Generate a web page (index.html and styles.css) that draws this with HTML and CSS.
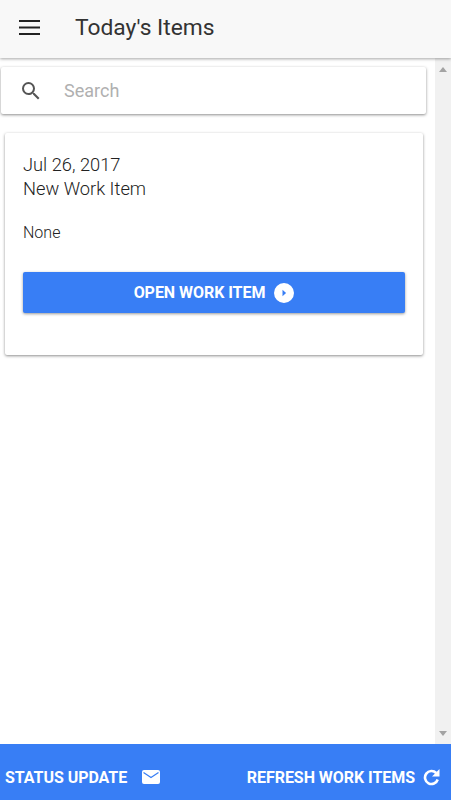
FILE: index.html
```html
<!DOCTYPE html>
<html lang="en">
<head>
<meta charset="UTF-8">
<meta name="viewport" content="width=device-width, initial-scale=1.0">
<title>Today's Items</title>
<link rel="stylesheet" href="styles.css">
</head>
<body>
<div class="page">
    <header class="top-bar">
        <svg class="menu-icon" width="21" height="15" viewBox="0 0 21 15"><path d="M0 0h21v2H0zM0 6.500h21v2H0zM0 13h21v2H0z"/></svg>
        <h1 class="top-title">Today's Items</h1>
    </header>

    <div class="middle">
        <main class="content">
            <div class="search-box">
                <svg class="search-icon" width="24" height="24" viewBox="0 0 24 24"><path d="M15.500 14h-.79l-.28-.27A6.470 6.470 0 0 0 16 9.500 6.500 6.500 0 1 0 9.500 16c1.610 0 3.090-.59 4.230-1.570l.27.280v.79l5 4.990L20.490 19l-4.990-5zm-6 0C7.010 14 5 11.990 5 9.500S7.010 5 9.500 5 14 7.010 14 9.500 11.990 14 9.500 14z"/></svg>
                <span class="search-text">Search</span>
            </div>

            <section class="card">
                <div class="card-line">Jul 26, 2017</div>
                <div class="card-line">New Work Item</div>
                <p class="card-note">None</p>
                <button class="open-btn" type="button">
                    OPEN WORK ITEM
                    <svg class="open-icon" width="20" height="20" viewBox="0 0 20 20"><path fill-rule="evenodd" d="M10 0a10 10 0 1 0 0 20 10 10 0 0 0 0-20zM8.500 6.800l3.600 3.200-3.600 3.200z"/></svg>
                </button>
            </section>
        </main>

        <div class="scrollbar">
            <span class="arrow-up"></span>
            <span class="arrow-down"></span>
        </div>
    </div>

    <footer class="bottom-bar">
        <button class="bar-btn" type="button">
            STATUS UPDATE
            <svg class="mail-icon" width="18" height="14" viewBox="0 0 18 14"><rect width="18" height="14" rx="2" fill="#fff"/><path d="M1.500 2.500 9 7.500l7.500-5" fill="none" stroke="#387ef5" stroke-width="1.200"/></svg>
        </button>
        <button class="bar-btn" type="button">
            REFRESH WORK ITEMS
            <svg class="refresh-icon" width="17" height="17" viewBox="0 0 17 17"><path d="M13.200 4A6.500 6.500 0 1 0 14.700 10.500" fill="none" stroke="#fff" stroke-width="2.600"/><path d="M16.500 0v7.500H9z" fill="#fff"/></svg>
        </button>
    </footer>
</div>
</body>
</html>
```

FILE: styles.css
```css
body {
    font-family: Roboto, "Liberation Sans", sans-serif;
    background-color: #fff;
    margin: 0;
    padding: 0;
}

.page {
    display: flex;
    flex-direction: column;
    height: 800px;
    overflow: hidden;
}

.top-bar {
    display: flex;
    align-items: center;
    height: 58px;
    box-sizing: border-box;
    padding-bottom: 4px;
    flex-shrink: 0;
    background-color: #f8f8f8;
    box-shadow: 0 1px 3px rgba(0, 0, 0, 0.35);
    position: relative;
    z-index: 2;
}

.menu-icon {
    margin-left: 19px;
    fill: #222;
}

.top-title {
    margin: 0 0 0 35px;
    font-size: 22.8px;
    font-weight: 400;
    color: #333;
}

.middle {
    display: flex;
    flex: 1;
    min-height: 0;
}

.content {
    flex: 1;
    min-width: 0;
    padding-top: 9px;
}

.search-box {
    display: flex;
    align-items: center;
    height: 47px;
    margin: 0 9px 0 1px;
    background-color: #fff;
    border-radius: 2px;
    box-shadow: 0 1px 3px rgba(0, 0, 0, 0.45);
}

.search-icon {
    margin-left: 18px;
    fill: #555;
}

.search-text {
    margin-left: 21px;
    font-size: 18px;
    color: #b0b0b0;
}

.card {
    margin: 19px 12px 0 5px;
    padding: 20px 18px 42px;
    background-color: #fff;
    border-radius: 2px;
    box-shadow: 0 1px 3px rgba(0, 0, 0, 0.45);
}

.card-line {
    font-size: 18.3px;
    font-weight: 300;
    line-height: 24px;
    color: #222;
}

.card-note {
    margin: 22px 0 29px;
    font-size: 16px;
    font-weight: 300;
    line-height: 20px;
    color: #222;
}

.open-btn {
    display: flex;
    align-items: center;
    justify-content: center;
    gap: 9px;
    width: 100%;
    height: 41px;
    padding: 0;
    border: none;
    border-radius: 2px;
    background-color: #387ef5;
    color: #fff;
    font-family: inherit;
    font-size: 16px;
    font-weight: 700;
    letter-spacing: -0.05px;
    box-shadow: 0 1px 3px rgba(0, 0, 0, 0.4);
}

.open-icon {
    fill: #fff;
}

.scrollbar {
    display: flex;
    flex-direction: column;
    justify-content: space-between;
    align-items: center;
    width: 16px;
    padding: 9px 0 8px;
    box-sizing: border-box;
    background-color: #f1f1f1;
}

.arrow-up {
    border-left: 4px solid transparent;
    border-right: 4px solid transparent;
    border-bottom: 5px solid #a3a3a3;
}

.arrow-down {
    border-left: 4px solid transparent;
    border-right: 4px solid transparent;
    border-top: 5px solid #a3a3a3;
}

.bottom-bar {
    display: flex;
    justify-content: space-between;
    align-items: center;
    height: 56px;
    box-sizing: border-box;
    flex-shrink: 0;
    padding: 10px 11px 0 5px;
    background-color: #387ef5;
}

.bar-btn {
    display: flex;
    align-items: center;
    padding: 0;
    border: none;
    background: none;
    color: #fff;
    font-family: inherit;
    font-size: 16px;
    font-weight: 700;
    letter-spacing: -0.05px;
}

.mail-icon {
    margin-left: 15px;
}

.refresh-icon {
    margin-left: 8px;
}
```
